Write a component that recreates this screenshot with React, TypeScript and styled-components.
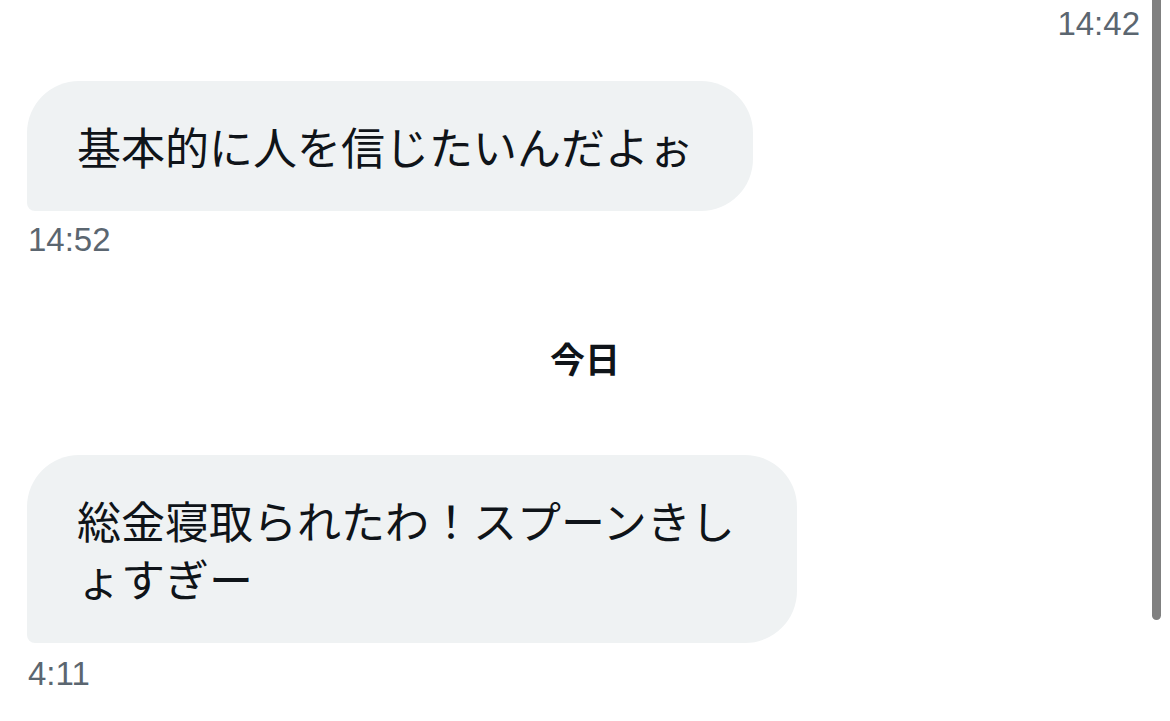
import React from "react";
import styled, { createGlobalStyle } from "styled-components";

const Global = createGlobalStyle`
  html, body { margin: 0; padding: 0; background: #ffffff; }
  #root { width: 1170px; height: 721px; }
`;

const Page = styled.div`
  position: relative;
  width: 1170px;
  height: 721px;
  overflow: hidden;
  background: #ffffff;
`;

const Thread = styled.div`
  display: flex;
  flex-direction: column;
  align-items: flex-start;
  padding: 5px 30px 0 27px;
`;

const Time = styled.div<{ $right?: boolean; $gap?: number }>`
  font-family: "Liberation Sans", Arial, sans-serif;
  font-size: 33px;
  color: #5b6670;
  align-self: ${(p) => (p.$right ? "flex-end" : "flex-start")};
  margin-top: ${(p) => p.$gap ?? 0}px;
  padding-left: 1px;
`;

const Bubble = styled.div<{ $gap: number }>`
  margin-top: ${(p) => p.$gap}px;
  box-sizing: border-box;
  max-width: 770px;
  padding: 36px 60px 36px 50px;
  background: #eff2f3;
  border-radius: 52px 52px 52px 8px;
  font-family: "Noto Sans CJK JP", "Noto Sans", sans-serif;
  font-size: 44px;
  line-height: 58px;
  color: #0f1419;
  line-break: anywhere;
`;

const DayDivider = styled.div<{ $gap: number }>`
  align-self: stretch;
  margin-top: ${(p) => p.$gap}px;
  padding-left: 3px;
  text-align: center;
  font-family: "Noto Sans CJK JP", sans-serif;
  font-weight: 700;
  font-size: 35px;
  line-height: 44px;
  color: #0f1419;
`;

const ScrollThumb = styled.div`
  position: absolute;
  top: 0;
  right: 9px;
  width: 9px;
  height: 620px;
  background: #808080;
  border-radius: 0 0 5px 5px;
`;

export default function App() {
  return (
    <Page>
      <Global />
      <Thread>
        <Time $right>14:42</Time>
        <Bubble $gap={38}>基本的に人を信じたいんだよぉ</Bubble>
        <Time $gap={10}>14:52</Time>
        <DayDivider $gap={77}>今日</DayDivider>
        <Bubble $gap={75}>総金寝取られたわ！スプーンきしょすぎー</Bubble>
        <Time $gap={12}>4:11</Time>
      </Thread>
      <ScrollThumb />
    </Page>
  );
}
